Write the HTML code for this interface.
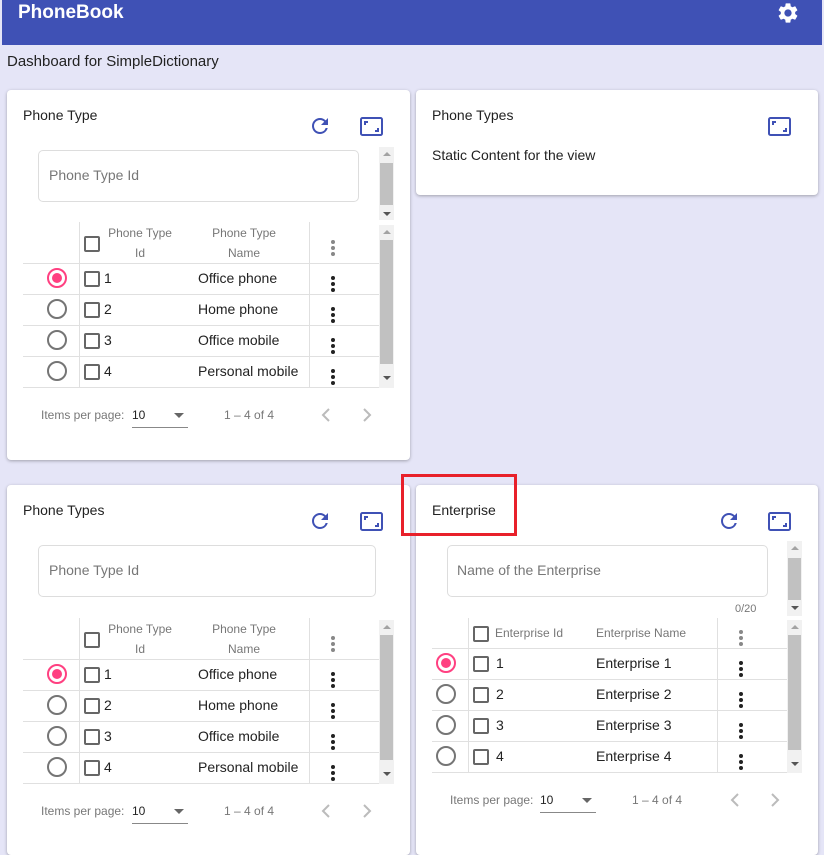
<!DOCTYPE html>
<html><head><meta charset="utf-8"><style>
*{box-sizing:border-box;margin:0;padding:0}
body{width:824px;height:838px;overflow:hidden;background:#e5e5f7;font-family:"Liberation Sans",Arial,sans-serif;color:#222;position:relative}
.a{position:absolute}
.hdr{left:2px;top:0;width:820px;height:45px;background:#3f51b5}
.card{background:#fff;border-radius:4px;box-shadow:0 1px 3px rgba(0,0,0,.3)}
.t{font-size:14px;white-space:nowrap}
.inp{border:1px solid #ddd;border-radius:5px}
.ph{font-size:14px;color:#777}
.sb{background:#f1f1f1;width:15px}
.th{background:#c1c1c1;left:1px;width:13px}
.up,.dn{left:4px;width:0;height:0;border-left:4px solid transparent;border-right:4px solid transparent}
.up{border-bottom:4px solid #a3a3a3}
.dn{border-top:4px solid #555}
.row{height:31px;border-bottom:1px solid #e0e0e0}
.vl{width:1px;background:#e0e0e0}
.rad{width:20px;height:20px;border:2px solid #757575;border-radius:50%}
.rad.on{border-color:#ff4081}
.rad.on::after{content:"";position:absolute;left:3px;top:3px;width:10px;height:10px;border-radius:50%;background:#ff4081}
.cb{width:16px;height:16px;border:2px solid #666;border-radius:2px}
.keb{width:4px}
.keb i{display:block;width:4px;height:4px;border-radius:50%;background:#222;margin-bottom:2px}
.keb.g i{background:#888}
.hc{font-size:12px;color:#777;text-align:center;line-height:20px}
.sm{font-size:12px;color:#777;white-space:nowrap}
</style></head><body>
<div class="a hdr"></div>
<div class="a" style="left:18px;top:2px;color:#fff;font-size:19px;font-weight:bold">PhoneBook</div>
<svg class="a" style="left:776px;top:1px" width="24" height="24" viewBox="0 0 24 24"><path fill="#fff" d="M19.14 12.94c.04-.3.06-.61.06-.94 0-.32-.02-.64-.07-.94l2.03-1.58a.49.49 0 00.12-.61l-1.92-3.32a.488.488 0 00-.59-.22l-2.39.96c-.5-.38-1.030-.7-1.62-.94l-.36-2.54a.484.484 0 00-.48-.41h-3.84c-.24 0-.43.17-.47.41l-.36 2.54c-.59.24-1.13.57-1.62.94l-2.39-.96c-.22-.08-.47 0-.59.22L2.74 8.87c-.12.21-.08.47.12.61l2.03 1.58c-.05.3-.09.63-.09.94s.02.64.07.94l-2.03 1.58a.49.49 0 00-.12.61l1.92 3.32c.12.22.37.29.59.22l2.39-.96c.5.38 1.03.7 1.62.94l.36 2.54c.05.24.24.41.48.41h3.84c.24 0 .44-.17.47-.41l.36-2.54c.59-.24 1.13-.56 1.62-.94l2.39.96c.22.08.47 0 .59-.22l1.92-3.32c.12-.22.07-.47-.12-.61l-2.01-1.58zM12 15.6c-1.98 0-3.6-1.62-3.6-3.6s1.62-3.6 3.6-3.6 3.6 1.62 3.6 3.6-1.62 3.6-3.6 3.6z"/></svg>
<div class="a" style="left:7px;top:53px;font-size:15px">Dashboard for SimpleDictionary</div>

<!-- Card 1 -->
<div class="a card" style="left:7px;top:90px;width:403px;height:370px"></div>
<div class="a t" style="left:23px;top:107px">Phone Type</div>
<svg class="a" style="left:308px;top:114px" width="24" height="24" viewBox="0 0 24 24"><path fill="#3f51b5" d="M17.65 6.35A7.958 7.958 0 0012 4c-4.42 0-7.99 3.58-7.99 8s3.57 8 7.99 8c3.73 0 6.84-2.55 7.73-6h-2.08A5.99 5.99 0 0112 18c-3.31 0-6-2.69-6-6s2.69-6 6-6c1.66 0 3.14.69 4.22 1.78L13 11h7V4l-2.35 2.35z"/></svg>
<svg class="a" style="left:360px;top:117px" width="23" height="19" viewBox="0 0 23 19"><rect x="1" y="1" width="21" height="17" rx="1.5" fill="none" stroke="#3f51b5" stroke-width="2"/><path d="M5 8V5h3M18 11v3h-3" fill="none" stroke="#3f51b5" stroke-width="2"/></svg>
<div class="a inp" style="left:38px;top:150px;width:321px;height:52px"></div>
<div class="a ph" style="left:49px;top:167px">Phone Type Id</div>
<div class="a sb" style="left:379px;top:147px;height:73px"><div class="a up" style="top:5px"></div><div class="a th" style="top:16px;height:42px"></div><div class="a dn" style="top:65px"></div></div>
<div class="a row" style="left:23px;top:222px;width:356px;height:42px"></div>
<div class="a cb" style="left:84px;top:236px"></div>
<div class="a hc" style="left:100px;top:223px;width:80px">Phone Type<br>Id</div>
<div class="a hc" style="left:204px;top:223px;width:80px">Phone Type<br>Name</div>
<div class="a keb g" style="left:331px;top:240px"><i></i><i></i><i></i></div>
<div class="a row" style="left:23px;top:264px;width:356px"></div>
<div class="a row" style="left:23px;top:295px;width:356px"></div>
<div class="a row" style="left:23px;top:326px;width:356px"></div>
<div class="a row" style="left:23px;top:357px;width:356px"></div>
<div class="a vl" style="left:79px;top:222px;height:166px"></div>
<div class="a vl" style="left:309px;top:222px;height:166px"></div>
<div class="a rad on" style="left:47px;top:268px"></div><div class="a cb" style="left:84px;top:271px"></div><div class="a t" style="left:104px;top:270px">1</div><div class="a t" style="left:198px;top:270px">Office phone</div><div class="a keb" style="left:331px;top:276px"><i></i><i></i><i></i></div>
<div class="a rad" style="left:47px;top:299px"></div><div class="a cb" style="left:84px;top:302px"></div><div class="a t" style="left:104px;top:301px">2</div><div class="a t" style="left:198px;top:301px">Home phone</div><div class="a keb" style="left:331px;top:307px"><i></i><i></i><i></i></div>
<div class="a rad" style="left:47px;top:330px"></div><div class="a cb" style="left:84px;top:333px"></div><div class="a t" style="left:104px;top:332px">3</div><div class="a t" style="left:198px;top:332px">Office mobile</div><div class="a keb" style="left:331px;top:338px"><i></i><i></i><i></i></div>
<div class="a rad" style="left:47px;top:361px"></div><div class="a cb" style="left:84px;top:364px"></div><div class="a t" style="left:104px;top:363px">4</div><div class="a t" style="left:198px;top:363px">Personal mobile</div><div class="a keb" style="left:331px;top:369px"><i></i><i></i><i></i></div>
<div class="a sb" style="left:379px;top:225px;height:163px"><div class="a up" style="top:5px"></div><div class="a th" style="top:15px;height:124px"></div><div class="a dn" style="top:151px"></div></div>
<div class="a sm" style="left:41px;top:408px">Items per page:</div>
<div class="a sm" style="left:132px;top:408px;color:#222">10</div>
<div class="a" style="left:132px;top:427px;width:56px;height:1px;background:#888"></div>
<div class="a dn" style="left:174px;top:413px;border-left-width:5px;border-right-width:5px;border-top:5px solid #666"></div>
<div class="a sm" style="left:224px;top:408px">1 – 4 of 4</div>
<svg class="a" style="left:321px;top:408px" width="10" height="14"><path d="M8 1L2 7l6 6" fill="none" stroke="#bbb" stroke-width="2"/></svg>
<svg class="a" style="left:362px;top:408px" width="10" height="14"><path d="M2 1l6 6-6 6" fill="none" stroke="#bbb" stroke-width="2"/></svg>

<!-- Card 2 -->
<div class="a card" style="left:416px;top:90px;width:402px;height:105px"></div>
<div class="a t" style="left:432px;top:107px">Phone Types</div>
<svg class="a" style="left:768px;top:117px" width="23" height="19" viewBox="0 0 23 19"><rect x="1" y="1" width="21" height="17" rx="1.5" fill="none" stroke="#3f51b5" stroke-width="2"/><path d="M5 8V5h3M18 11v3h-3" fill="none" stroke="#3f51b5" stroke-width="2"/></svg>
<div class="a t" style="left:432px;top:147px">Static Content for the view</div>

<!-- Card 3 -->
<div class="a card" style="left:7px;top:485px;width:403px;height:370px"></div>
<div class="a t" style="left:23px;top:502px">Phone Types</div>
<svg class="a" style="left:308px;top:509px" width="24" height="24" viewBox="0 0 24 24"><path fill="#3f51b5" d="M17.65 6.35A7.958 7.958 0 0012 4c-4.42 0-7.99 3.58-7.99 8s3.57 8 7.99 8c3.73 0 6.84-2.55 7.73-6h-2.08A5.99 5.99 0 0112 18c-3.31 0-6-2.69-6-6s2.69-6 6-6c1.66 0 3.14.69 4.22 1.78L13 11h7V4l-2.35 2.35z"/></svg>
<svg class="a" style="left:360px;top:512px" width="23" height="19" viewBox="0 0 23 19"><rect x="1" y="1" width="21" height="17" rx="1.5" fill="none" stroke="#3f51b5" stroke-width="2"/><path d="M5 8V5h3M18 11v3h-3" fill="none" stroke="#3f51b5" stroke-width="2"/></svg>
<div class="a inp" style="left:38px;top:545px;width:338px;height:52px"></div>
<div class="a ph" style="left:49px;top:562px">Phone Type Id</div>
<div class="a row" style="left:23px;top:618px;width:356px;height:42px"></div>
<div class="a cb" style="left:84px;top:632px"></div>
<div class="a hc" style="left:100px;top:619px;width:80px">Phone Type<br>Id</div>
<div class="a hc" style="left:204px;top:619px;width:80px">Phone Type<br>Name</div>
<div class="a keb g" style="left:331px;top:636px"><i></i><i></i><i></i></div>
<div class="a row" style="left:23px;top:660px;width:356px"></div>
<div class="a row" style="left:23px;top:691px;width:356px"></div>
<div class="a row" style="left:23px;top:722px;width:356px"></div>
<div class="a row" style="left:23px;top:753px;width:356px"></div>
<div class="a vl" style="left:79px;top:618px;height:166px"></div>
<div class="a vl" style="left:309px;top:618px;height:166px"></div>
<div class="a rad on" style="left:47px;top:664px"></div><div class="a cb" style="left:84px;top:667px"></div><div class="a t" style="left:104px;top:666px">1</div><div class="a t" style="left:198px;top:666px">Office phone</div><div class="a keb" style="left:331px;top:672px"><i></i><i></i><i></i></div>
<div class="a rad" style="left:47px;top:695px"></div><div class="a cb" style="left:84px;top:698px"></div><div class="a t" style="left:104px;top:697px">2</div><div class="a t" style="left:198px;top:697px">Home phone</div><div class="a keb" style="left:331px;top:703px"><i></i><i></i><i></i></div>
<div class="a rad" style="left:47px;top:726px"></div><div class="a cb" style="left:84px;top:729px"></div><div class="a t" style="left:104px;top:728px">3</div><div class="a t" style="left:198px;top:728px">Office mobile</div><div class="a keb" style="left:331px;top:734px"><i></i><i></i><i></i></div>
<div class="a rad" style="left:47px;top:757px"></div><div class="a cb" style="left:84px;top:760px"></div><div class="a t" style="left:104px;top:759px">4</div><div class="a t" style="left:198px;top:759px">Personal mobile</div><div class="a keb" style="left:331px;top:765px"><i></i><i></i><i></i></div>
<div class="a sb" style="left:379px;top:620px;height:164px"><div class="a up" style="top:5px"></div><div class="a th" style="top:15px;height:125px"></div><div class="a dn" style="top:152px"></div></div>
<div class="a sm" style="left:41px;top:804px">Items per page:</div>
<div class="a sm" style="left:132px;top:804px;color:#222">10</div>
<div class="a" style="left:132px;top:823px;width:56px;height:1px;background:#888"></div>
<div class="a dn" style="left:174px;top:809px;border-left-width:5px;border-right-width:5px;border-top:5px solid #666"></div>
<div class="a sm" style="left:224px;top:804px">1 – 4 of 4</div>
<svg class="a" style="left:321px;top:804px" width="10" height="14"><path d="M8 1L2 7l6 6" fill="none" stroke="#bbb" stroke-width="2"/></svg>
<svg class="a" style="left:362px;top:804px" width="10" height="14"><path d="M2 1l6 6-6 6" fill="none" stroke="#bbb" stroke-width="2"/></svg>

<!-- Card 4 -->
<div class="a card" style="left:416px;top:485px;width:402px;height:370px"></div>
<div class="a t" style="left:432px;top:502px">Enterprise</div>
<svg class="a" style="left:717px;top:509px" width="24" height="24" viewBox="0 0 24 24"><path fill="#3f51b5" d="M17.65 6.35A7.958 7.958 0 0012 4c-4.42 0-7.99 3.58-7.99 8s3.57 8 7.99 8c3.73 0 6.84-2.55 7.73-6h-2.08A5.99 5.99 0 0112 18c-3.31 0-6-2.69-6-6s2.69-6 6-6c1.66 0 3.14.69 4.22 1.78L13 11h7V4l-2.35 2.35z"/></svg>
<svg class="a" style="left:768px;top:512px" width="23" height="19" viewBox="0 0 23 19"><rect x="1" y="1" width="21" height="17" rx="1.5" fill="none" stroke="#3f51b5" stroke-width="2"/><path d="M5 8V5h3M18 11v3h-3" fill="none" stroke="#3f51b5" stroke-width="2"/></svg>
<div class="a inp" style="left:447px;top:545px;width:321px;height:52px"></div>
<div class="a ph" style="left:457px;top:562px">Name of the Enterprise</div>
<div class="a" style="left:735px;top:603px;font-size:11px;color:#777">0/20</div>
<div class="a sb" style="left:787px;top:541px;height:75px"><div class="a up" style="top:5px"></div><div class="a th" style="top:17px;height:42px"></div><div class="a dn" style="top:65px"></div></div>
<div class="a row" style="left:432px;top:618px;width:355px"></div>
<div class="a cb" style="left:473px;top:626px"></div>
<div class="a sm" style="left:495px;top:626px">Enterprise Id</div>
<div class="a sm" style="left:596px;top:626px">Enterprise Name</div>
<div class="a keb g" style="left:739px;top:630px"><i></i><i></i><i></i></div>
<div class="a row" style="left:432px;top:649px;width:355px"></div>
<div class="a row" style="left:432px;top:680px;width:355px"></div>
<div class="a row" style="left:432px;top:711px;width:355px"></div>
<div class="a row" style="left:432px;top:742px;width:355px"></div>
<div class="a vl" style="left:468px;top:618px;height:155px"></div>
<div class="a vl" style="left:717px;top:618px;height:155px"></div>
<div class="a rad on" style="left:436px;top:653px"></div><div class="a cb" style="left:473px;top:656px"></div><div class="a t" style="left:496px;top:655px">1</div><div class="a t" style="left:596px;top:655px">Enterprise 1</div><div class="a keb" style="left:739px;top:661px"><i></i><i></i><i></i></div>
<div class="a rad" style="left:436px;top:684px"></div><div class="a cb" style="left:473px;top:687px"></div><div class="a t" style="left:496px;top:686px">2</div><div class="a t" style="left:596px;top:686px">Enterprise 2</div><div class="a keb" style="left:739px;top:692px"><i></i><i></i><i></i></div>
<div class="a rad" style="left:436px;top:715px"></div><div class="a cb" style="left:473px;top:718px"></div><div class="a t" style="left:496px;top:717px">3</div><div class="a t" style="left:596px;top:717px">Enterprise 3</div><div class="a keb" style="left:739px;top:723px"><i></i><i></i><i></i></div>
<div class="a rad" style="left:436px;top:746px"></div><div class="a cb" style="left:473px;top:749px"></div><div class="a t" style="left:496px;top:748px">4</div><div class="a t" style="left:596px;top:748px">Enterprise 4</div><div class="a keb" style="left:739px;top:754px"><i></i><i></i><i></i></div>
<div class="a sb" style="left:787px;top:620px;height:153px"><div class="a up" style="top:5px"></div><div class="a th" style="top:15px;height:115px"></div><div class="a dn" style="top:142px"></div></div>
<div class="a sm" style="left:450px;top:793px">Items per page:</div>
<div class="a sm" style="left:540px;top:793px;color:#222">10</div>
<div class="a" style="left:540px;top:812px;width:56px;height:1px;background:#888"></div>
<div class="a dn" style="left:582px;top:798px;border-left-width:5px;border-right-width:5px;border-top:5px solid #666"></div>
<div class="a sm" style="left:632px;top:793px">1 – 4 of 4</div>
<svg class="a" style="left:730px;top:793px" width="10" height="14"><path d="M8 1L2 7l6 6" fill="none" stroke="#bbb" stroke-width="2"/></svg>
<svg class="a" style="left:770px;top:793px" width="10" height="14"><path d="M2 1l6 6-6 6" fill="none" stroke="#bbb" stroke-width="2"/></svg>

<div class="a" style="left:401px;top:474px;width:116px;height:62px;border:3px solid #e8202a"></div>
</body></html>
